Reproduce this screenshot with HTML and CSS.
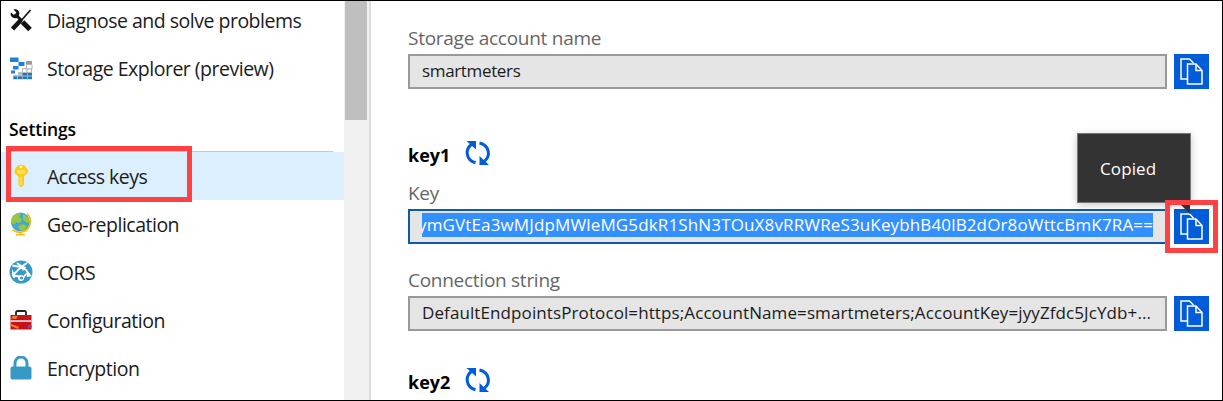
FILE: index.html
```
<!DOCTYPE html>
<html lang="en">
<head>
<meta charset="utf-8">
<title>Access keys</title>
<link rel="stylesheet" href="styles.css">
</head>
<body>
<svg class="defs" width="0" height="0">
  <symbol id="copy" viewBox="0 0 35 35">
    <path d="M13 25H7V5h8.500l4 4" fill="none" stroke="#fff" stroke-width="1.500"/>
    <path d="M13.500 10h8.500l6 6.500V30H13.500z" fill="#015cda" stroke="#fff" stroke-width="1.500"/>
    <path d="M22 10v6.500h6" fill="none" stroke="#fff" stroke-width="1.500"/>
  </symbol>
  <symbol id="refresh" viewBox="0 0 26 26">
    <path d="M10.500 22.800C.5 20 0 9 6.500 4.500M14.500 3c10.500 2.500 11 13.500 5 18" fill="none" stroke="#015cda" stroke-width="3"/>
    <path d="M1.500 1h9.500v8.500zM14.500 16V25H24z" fill="#015cda"/>
  </symbol>
</svg>
<div class="page">
  <nav class="sidebar">
    <a class="item"><svg class="icon" viewBox="0 0 24 24"><path d="M21.500 2 11 14" stroke="#111" stroke-width="1.600"/><path d="m12 12-8.500 9" stroke="#111" stroke-width="4.500"/><path d="m6 6 7 7" stroke="#111" stroke-width="3"/><path d="m13.500 14 7.500 7.500" stroke="#111" stroke-width="5"/><path d="M2 4.500 5 7l2-.5.300-2L4.500 1.500C8 .5 11.500 3 10 7.500L8 10C4 11 .5 8 2 4.500z" fill="#111"/></svg><span>Diagnose and solve problems</span></a>
    <a class="item"><svg class="icon" viewBox="0 0 24 24"><path d="M17 5h6v3.500h-6z" fill="#999"/><path d="M17.500 8.500h5.500v4.500h-5.500zM13.500 12.500H18v4h-4.500z" fill="#fff" stroke="#b5b5b5"/><path d="M9 16h14v7.500H4V19h5z" fill="#b9bdc0"/><path d="M1 1.500h8.500V6H1zM9.500 6h6v4h-6zM4 10h5.500v3.500H4zM2 14.500h4v3H2z" fill="#1f82d2"/><path d="M14 12.500h4M18 13v3.500h4.500V13z" fill="#fff" stroke="#b5b5b5"/><path d="M13.500 17H18v2.500h-4.500zM18.700 17H23v2.500h-4.300zM4.500 20.500H8V23H4.500zM9 20.500h4V23H9zM13.700 20.500H18V23h-4.300zM18.700 20.500H23V23h-4.300z" fill="#1f78c6"/></svg><span>Storage Explorer (preview)</span></a>
    <h2 class="heading"><span>Settings</span></h2>
    <a class="item selected"><svg class="icon" viewBox="0 0 24 24"><path d="m8.500 1.500 3.500-1 3.500 1L19 6v2.500l-4 4V21l-3 2.500L9.500 21v-8.500L5.500 9V6z" fill="#fdcc12"/><path d="M8 7h8.500M8.500 9h7.500M12 13v8" stroke="#fff0a0"/><circle cx="12" cy="3" r="1.300" fill="#fff"/></svg><span>Access keys</span></a>
    <a class="item"><svg class="icon" viewBox="0 0 24 24"><circle cx="11.500" cy="10" r="9.500" fill="#43a4d5"/><path d="m3 5 5-4 4 .5L10 5l3 2-2 4-4-1-2 3-3-3zM14 2l5 3 2 5-3 1-4-3zM9 14l5-2 4 2-3 5-4-1z" fill="#95c93d"/><path d="M18 1.500C24 7 22 19 11.500 20.500 8 20.500 5 19 3.500 18M11.500 20v3M7 22.800h9" fill="none" stroke="#fdb813" stroke-width="1.600"/></svg><span>Geo-replication</span></a>
    <a class="item"><svg class="icon" viewBox="0 0 24 24"><circle cx="12" cy="12" r="11.500" fill="#3999c6"/><path d="M3.500 5.500 12 7l5 3 4.500 6M8 3l9 7M18 3l-6 4-7 7v4M14 18l3-4M3 15l9 2" fill="none" stroke="#fff" stroke-width="1.800"/><path d="m3 9 4 8-4-1zM11 5l6 2-3 4zM17 12l6 4-5 1z" fill="#fff"/><circle cx="12" cy="18" r="3" fill="#fff"/><circle cx="12.500" cy="18" r="1.500" fill="#3999c6"/></svg><span>CORS</span></a>
    <a class="item"><svg class="icon" viewBox="0 0 24 24"><path d="M7 7V4.500Q7 3 8.500 3h7Q17 3 17 4.500V7" fill="none" stroke="#222" stroke-width="1.800"/><path d="M1.500 7h21v14.500h-21z" fill="#c51419"/><path d="M1.500 12.200h21v1.800h-21z" fill="#f3d2d2"/><path d="m4 8 5 0-2 3-5-.5zM2 16l8 3-1 2-7-3z" fill="#f58220"/><path d="M19 17h3.500v3H19z" fill="#804998"/></svg><span>Configuration</span></a>
    <a class="item"><svg class="icon" viewBox="0 0 24 24"><path d="M6 12V7a6 6 0 0 1 12 0v5" fill="none" stroke="#3999c6" stroke-width="3"/><rect x="1.500" y="10.500" width="21" height="13" rx="2" fill="#3999c6"/></svg><span>Encryption</span></a>
  </nav>
  <div class="scroll"><div class="thumb"></div></div>
  <main class="content">
    <div class="label first"><span>Storage account name</span></div>
    <div class="row"><div class="field"><span class="account">smartmeters</span></div><button class="copy"><svg><use href="#copy"/></svg></button></div>
    <div class="title"><b>key1</b><svg class="refresh"><use href="#refresh"/></svg></div>
    <div class="label key"><span>Key</span></div>
    <div class="row"><div class="field focus"><div class="selection"><span>ymGVtEa3wMJdpMWleMG5dkR1ShN3TOuX8vRRWReS3uKeybhB40lB2dOr8oWttcBmK7RA==</span></div></div><button class="copy"><svg><use href="#copy"/></svg></button></div>
    <div class="label conn"><span>Connection string</span></div>
    <div class="row"><div class="field"><span class="connection">DefaultEndpointsProtocol=https;AccountName=smartmeters;AccountKey=jyyZfdc5JcYdb+...</span></div><button class="copy"><svg><use href="#copy"/></svg></button></div>
    <div class="title second"><b>key2</b><svg class="refresh"><use href="#refresh"/></svg></div>
  </main>
  <div class="tooltip"><span>Copied</span></div>
  <div class="mark mark-nav"></div>
  <div class="mark mark-copy"></div>
</div>
</body>
</html>
```
FILE: styles.css
```
* { box-sizing: border-box; }
body { margin: 0; font-family: "Open Sans", "Noto Sans", sans-serif; color: #1b1b1b; background: #fff; }
.defs { position: absolute; }
.page { position: relative; display: flex; width: 1223px; height: 401px; border: 1px solid #000; overflow: hidden; }
.page span, .page b { white-space: nowrap; }
.sidebar { width: 343px; flex: none; margin-top: -5px; font-size: 19.5px; }
.item { display: flex; align-items: center; height: 48px; padding-left: 8px; gap: 14px; }
.icon { width: 24px; height: 24px; flex: none; }
.item span { line-height: 26px; padding-top: 1px; letter-spacing: -.5px; }
.selected { background: #dceffe; }
.heading { margin: 0 11px 0 8px; height: 60px; padding-top: 25px; font-size: 17.5px; line-height: 24px; font-weight: 600; letter-spacing: -.1px; color: #000; border-bottom: 1px solid #c8c8c8; }
.scroll { width: 27px; flex: none; background: #f0f0f0; border-right: 2px solid #dcdcdc; padding: 0 2px 0 1px; }
.thumb { height: 119px; background: #bfbfbf; }
.content { flex: 1; padding-left: 37px; }
.label { height: 29px; font-size: 19px; line-height: 26px; letter-spacing: -.27px; color: #666; }
.label.first { margin-top: 24px; }
.label.key { margin-top: 11px; }
.label.conn { margin-top: 23px; }
.row { display: flex; gap: 7px; height: 35px; }
.field { width: 759px; height: 35px; border: 2px solid #999; background: #e5e5e5; padding: 0 12px; font-size: 17px; line-height: 30px; color: #1b1b1b; }
.account { letter-spacing: -.35px; }
.connection { letter-spacing: .1px; }
.focus { border-color: #0f5aac; padding-top: 2px; }
.selection { display: flex; justify-content: flex-end; width: 731px; height: 24px; line-height: 24px; letter-spacing: .14px; overflow: hidden; background: #3390ff; color: #fff; }
.copy { width: 35px; height: 35px; padding: 0; border: 0; background: #015cda; }
.copy svg { display: block; width: 35px; height: 35px; }
.title { display: flex; align-items: center; gap: 16px; height: 30px; margin-top: 50px; font-size: 18px; color: #000; }
.title b { width: 41px; line-height: 28px; padding-top: 2px; }
.refresh { width: 26px; height: 26px; margin-top: -2px; }
.title.second { margin-top: 35px; }
.tooltip { position: absolute; left: 1076px; top: 132px; width: 114px; height: 70px; background: #333; border: 1px solid #777; box-shadow: 0 2px 8px rgba(0,0,0,.22); color: #fff; font-size: 17px; letter-spacing: .1px; line-height: 70px; padding-left: 22px; }
.tooltip::after { content: ""; position: absolute; right: 0; top: 68px; width: 12px; height: 12px; background: #333; clip-path: polygon(0 0, 100% 0, 100% 100%); }
.mark { position: absolute; border: 5px solid #ff4144; }
.mark-nav { left: 5px; top: 145px; width: 186px; height: 56px; }
.mark-copy { left: 1164px; top: 199px; width: 53px; height: 53px; }
```
